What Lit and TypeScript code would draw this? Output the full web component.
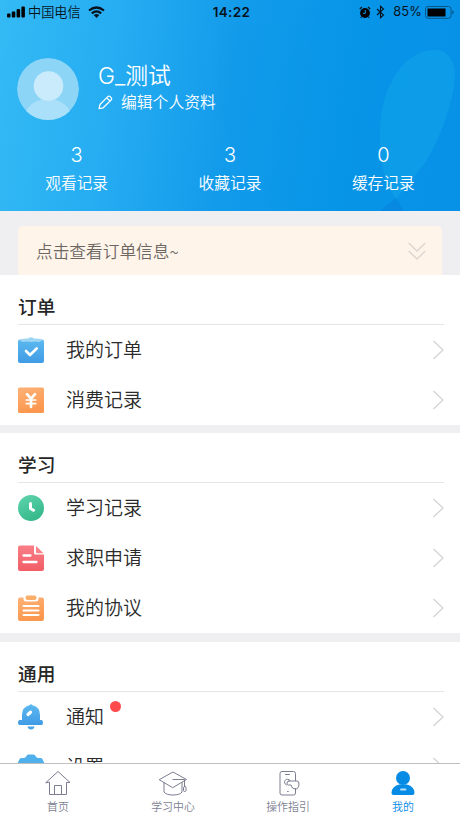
import { LitElement, html, css, svg } from "lit";
import { customElement } from "lit/decorators.js";

const icons: Record<string, unknown> = {
  order: svg`<rect x="0" y="2.500" width="26" height="23.500" rx="2" fill="url(#blue)"/><path d="M1 3Q4 1 10 1.500Q13-1 16 1.500Q22 1 25 3L21 5Q17 4 13 5Q9 4 5 5Z" fill="#9fd6f4"/><path d="M8 14l4 4L18.700 11.500" fill="none" stroke="#fff" stroke-width="2.600" stroke-linecap="round" stroke-linejoin="round"/>`,
  pay: svg`<rect y="0.500" width="26" height="25.500" rx="1.500" fill="url(#orange)"/><path d="M9 7.200l4 4.500 4-4.500M13 11.500V20" fill="none" stroke="#fff" stroke-width="2.700" stroke-linecap="round"/><path d="M8.300 13h9.400M8.300 16.700h9.400" stroke="#fff" stroke-width="1.700" stroke-linecap="round"/>`,
  clock: svg`<circle cx="13" cy="13" r="13" fill="url(#green)"/><path d="M12.500 8.500v5l3 1.800" fill="none" stroke="#fff" stroke-width="3" stroke-linecap="round" stroke-linejoin="round"/>`,
  job: svg`<path d="M2 .5h14v7.500q0 1.500 1.500 1.500H26V24a2 2 0 0 1-2 2H2a2 2 0 0 1-2-2V2.500a2 2 0 0 1 2-2Z" fill="url(#red)"/><path d="M18 1l7.500 7.300H19.500Q18 8.300 18 7Z" fill="#f98289"/><path d="M5.500 10.500h7M5.500 17h13" stroke="#fff" stroke-width="2.300" stroke-linecap="round"/>`,
  paper: svg`<rect y="2.500" width="26" height="23.500" rx="2" fill="url(#orange)"/><path d="M5.500 2v2q0 2.500 3 2.500h9q3 0 3-2.500V2" fill="#fff"/><rect x="7.500" y="0.500" width="11" height="4.500" rx="2" fill="#fbae6a"/><path d="M5.500 11h15M5.500 15.500h15M5.500 20h15" stroke="#fff" stroke-width="2" stroke-linecap="round"/>`,
  bell: svg`<path d="M11.500 1.200Q13-.7 14.500 1.200 22 3 22 11v5h1.500q1.500 0 1.500 2.500t-1.500 2.500H1.500Q0 21 0 18.500T1.500 16H4v-5Q4 3 11.500 1.200Z" fill="url(#blue)"/><path d="M9.500 22.500h7q-.5 3-3.500 3t-3.500-3Z" fill="#48a5e9"/><path d="M10 10.500l2.500-2.300" stroke="#fff" stroke-width="3.200" stroke-linecap="round"/>`,
  gear: svg`<path d="M10.500 .5h5q1.500 0 2.200 1.700.8 1.800 2.500 1.800h2.300q1.300 0 2 1.300l1.500 3q.5 1.200-.5 2.200-2 2.500 0 5 1 1 .5 2.200l-1.500 3q-.7 1.300-2 1.300h-2.300q-1.700 0-2.500 1.800-.7 1.700-2.200 1.700h-5q-1.500 0-2.200-1.700Q7.500 22 5.800 22H3.500q-1.300 0-2-1.300l-1.500-3q-.5-1.200.5-2.200 2-2.500 0-5-1-1-.5-2.200l1.500-3Q2.200 4 3.500 4h2.300q1.700 0 2.500-1.800Q9 .5 10.500.5Z" fill="#50b0ec"/><circle cx="13" cy="13" r="3" fill="#fff"/>`,
};

@customElement("menu-row")
class MenuRow extends LitElement {
  static properties = { icon: {}, label: {}, dot: { type: Boolean } };
  declare icon: string;
  declare label: string;
  declare dot: boolean;
  static styles = css`
    :host { display: flex; align-items: center; height: 50px; padding: 0 16px 0 18px; box-sizing: border-box; }
    .icon { width: 26px; height: 26px; margin-right: 22px; overflow: visible; }
    .label { position: relative; top: -1px; font-size: 19px; font-weight: 350; line-height: 28px; color: #2b2b2b; }
    .dot { position: absolute; left: 44px; top: -1px; width: 11px; height: 11px; border-radius: 50%; background: #ff4b4c; }
    .arrow { width: 12px; height: 20px; margin-left: auto; }
  `;
  render() {
    return html`<svg class="icon" viewBox="0 0 26 26"><defs>
      <linearGradient id="blue" x2="0" y2="1"><stop stop-color="#5db9ef"/><stop offset="1" stop-color="#409be5"/></linearGradient>
      <linearGradient id="orange" x2="0.300" y2="1"><stop stop-color="#fdb278"/><stop offset="1" stop-color="#fb974e"/></linearGradient>
      <linearGradient id="green" x2="0.500" y2="1"><stop stop-color="#60d5ad"/><stop offset="1" stop-color="#37b98c"/></linearGradient>
      <linearGradient id="red" x2="0" y2="1"><stop stop-color="#f97e86"/><stop offset="1" stop-color="#f25d67"/></linearGradient>
      </defs>${icons[this.icon]}</svg>
      <span class="label">${this.label}${this.dot ? html`<i class="dot"></i>` : ""}</span>
      <svg class="arrow" viewBox="0 0 12 20"><path d="M1.500 1l9.500 9-9.500 9" fill="none" stroke="#d2d2d5" stroke-width="1.200"/></svg>`;
  }
}

const sections = [
  { title: "订单", rows: [["order", "我的订单"], ["pay", "消费记录"]] },
  { title: "学习", rows: [["clock", "学习记录"], ["job", "求职申请"], ["paper", "我的协议"]] },
  { title: "通用", rows: [["bell", "通知"], ["gear", "设置"]] },
];
const stats = [["3", "观看记录"], ["3", "收藏记录"], ["0", "缓存记录"]];
const tabs = [
  { name: "首页", icon: svg`<path d="M1 12.500L13 1.500l12 11H21.500V24.500H4.500V12.500ZM9.500 24.500v-9h7v9"/>` },
  { name: "学习中心", icon: svg`<path d="M-.5 9.500L13 2 26.500 9.500 13 17.500ZM4 12.500v9.500q2 3 9 3t9-3V12.500M13 9.500h11.500v7"/><rect x="23.500" y="16.500" width="2.500" height="5" rx="1.200"/>` },
  { name: "操作指引", icon: svg`<path d="M20.500 10.500V3.500a2 2 0 0 0-2-2H7a2 2 0 0 0-2 2V23a2 2 0 0 0 2 2h11.500a2 2 0 0 0 2-2v-4.500M10.500 4.500h4M12.500 21.500h.8M11.500 15a3 3 0 1 1 3.500-4.500M14 11h8q2 0 2 3 0 5-4 5-3 0-4-4h-2.500q-1.500 0-1.500-2T14 11Z"/>` },
  { name: "我的", active: true, icon: svg`<circle class="solid" cx="13" cy="8" r="7"/><path class="solid" d="M9 14.500h8q7.500 2 7.500 8.500 0 2-2 2h-19q-2 0-2-2 0-6.500 7.500-8.500Z"/><path d="M11 19.500h4.500" class="smile"/>` },
];

@customElement("app-root")
class AppRoot extends LitElement {
  static styles = css`
    :host { display: flex; flex-direction: column; height: 818px; overflow: hidden; background: #fff; font-family: "Liberation Sans", "Noto Sans CJK SC", sans-serif; }
    svg { display: block; flex: none; }
    .header { position: relative; flex: none; height: 211px; color: #fff; background: linear-gradient(98deg, #34baf4 0%, #26adf2 24%, #139beb 50%, #0795e8 74%, #0791e7 100%); }
    .backdrop { position: absolute; inset: 0; }
    .status { position: relative; display: grid; grid-template-columns: 1fr auto 1fr; align-items: center; height: 24px; padding: 0 6px 0 7px; color: #07121c; }
    .side { display: flex; align-items: center; }
    .carrier { font: 350 13.200px/20px "Noto Sans CJK SC", sans-serif; margin: 0 7px 0 3px; }
    .time { font: 600 13.500px/20px Inter, sans-serif; letter-spacing: 0.350px; padding-left: 2px; }
    .right { justify-content: flex-end; }
    .bluetooth { margin-left: 5px; }
    .battery-text { font: 12.800px/20px Inter, sans-serif; letter-spacing: 0.200px; margin: 0 3px 0 8px; }
    .profile { position: relative; display: flex; align-items: flex-start; height: 119px; padding: 34px 0 0 17px; box-sizing: border-box; }
    .person { padding-left: 19px; }
    .name { font: 350 22.800px/30px Inter, "Noto Sans CJK SC", sans-serif; padding-top: 3px; }
    .edit { display: flex; align-items: center; font: 350 15.800px/22px "Noto Sans CJK SC", sans-serif; gap: 8px; }
    .stats { position: relative; display: grid; grid-template-columns: repeat(3, 1fr); text-align: center; }
    .num { font: 350 20px/24px Inter, sans-serif; }
    .stat { font: 350 15.700px/24px "Noto Sans CJK SC", sans-serif; margin-top: 4px; }
    .strip { flex: none; height: 64px; box-sizing: border-box; padding: 15px 18px 0; background: #efeff2; }
    .notice { display: flex; align-items: center; justify-content: space-between; height: 49px; padding: 0 16px 0 18px; border-radius: 5px 5px 0 0; background: #fff4ea; color: #6c6762; font: 350 16.700px/24px "Noto Sans CJK SC", sans-serif; }
    .content { flex: 1; min-height: 0; overflow: hidden; }
    .section + .section { border-top: 8px solid #efeff2; }
    .section + .section + .section { border-top-width: 9px; }
    .title { height: 50px; margin: 0 16px 0 18px; box-sizing: border-box; border-bottom: 1px solid #e6e6e8; font: 500 18.700px/61px "Noto Sans CJK SC", sans-serif; color: #262626; }
    menu-row { font-family: "Noto Sans CJK SC", sans-serif; }
    .tabs { flex: none; display: grid; grid-template-columns: repeat(4, 1fr); height: 55px; box-sizing: border-box; border-top: 1px solid #bfbfc2; background: #fff; }
    .tab { display: flex; flex-direction: column; align-items: center; padding: 6px 0 0 1px; color: #7c7e90; font: 350 10.900px/16px "Noto Sans CJK SC", sans-serif; gap: 2px; }
    .tab svg { width: 26px; height: 26px; overflow: visible; fill: none; stroke: currentColor; stroke-width: 1; stroke-linejoin: round; stroke-linecap: round; }
    .tab.active { color: #078ce5; }
    .solid { fill: currentColor; stroke: none; }
    .smile { stroke: #b9dff8; stroke-width: 1.800; }
  `;
  render() {
    return html`
      <div class="header">
        <svg class="backdrop" width="460" height="211" viewBox="0 0 460 211">
          <path d="M380 140Q378 98 400 68 420 46 442 51 458 58 454 87 447 126 425 163L396 199Q380 176 380 140Z" fill="#14a8ec" fill-opacity=".5"/>
          <path d="M218 24V98Q225 160 276 211H380L396 198 425 163Q447 126 454 87 458 58 442 51 420 46 400 68 378 98 380 140 330 90 300 24Z" fill="#0a96ea" fill-opacity=".08"/>
          <path d="M380 211l16-13 8 13Z" fill="#087fdc" fill-opacity=".45"/>
        </svg>
        <div class="status">
          <div class="side">
            <svg width="18" height="12" viewBox="0 0 18 12"><g><rect y="7.500" width="3.500" height="4" rx="1"/><rect x="4.800" y="5.500" width="3.500" height="6" rx="1"/><rect x="9.600" y="3" width="3.500" height="8.500" rx="1"/><rect x="14.400" y=".5" width="3.500" height="11" rx="1"/></g></svg>
            <span class="carrier">中国电信</span>
            <svg width="17" height="12" viewBox="0 0 17 12" fill="none" stroke="#07121c" stroke-width="2.200"><path d="M1 4.500Q8.500-1.500 16 4.500M3.800 7.300q4.700-3.800 9.400 0"/><path d="M5.700 9l2.800 3 2.800-3Q8.500 7 5.700 9Z" fill="#07121c" stroke="none"/></svg>
          </div>
          <span class="time">14:22</span>
          <div class="side right">
            <svg width="12" height="13" viewBox="0 0 12 13"><circle cx="6" cy="7" r="4.900"/><path d="M.8 3L3 1M11.200 3L9 1M2.500 11l-.7.700M9.500 11l.7.700" stroke="#07121c" stroke-width="1.300"/><path d="M6.300 4v3.300H4" fill="none" stroke="#129bea"/></svg>
            <svg class="bluetooth" width="9" height="14" viewBox="0 0 9 14"><path d="M1 4l6.500 6-3 2.700V1.300l3 2.700-6.500 6" fill="none" stroke="#07121c" stroke-width="1.100"/></svg>
            <span class="battery-text">85%</span>
            <svg width="29" height="13" viewBox="0 0 29 13"><rect x=".5" y=".5" width="25.500" height="11.800" rx="2.500" fill="none" stroke="#075789"/><rect x="2.500" y="2.500" width="18" height="8"/><path d="M27.200 4.300q1.500.5 1.500 2t-1.500 2Z" fill="#075789"/></svg>
          </div>
        </div>
        <div class="profile">
          <svg width="62" height="62" viewBox="0 0 62 62"><defs><clipPath id="face"><circle cx="31" cy="31" r="31"/></clipPath></defs><g clip-path="url(#face)"><circle cx="31" cy="31" r="31" fill="#8dd5f7"/><ellipse cx="31" cy="59" rx="23" ry="18" fill="#aae0f9"/><circle cx="31.500" cy="28" r="14.800" fill="#caebfb"/></g></svg>
          <div class="person">
            <div class="name">G_测试</div>
            <div class="edit"><svg width="15" height="15" viewBox="0 0 15 15" fill="none" stroke="#fff" stroke-width="1.200" stroke-linejoin="round"><path d="M1 13.700l1-4.200L9.800 1.700q1.200-1.200 2.400 0l.9.900q1.200 1.200 0 2.400L5.200 12.800ZM8.800 2.800L12 6"/></svg><span>编辑个人资料</span></div>
          </div>
        </div>
        <div class="stats">${stats.map(([n, t]) => html`<div><div class="num">${n}</div><div class="stat">${t}</div></div>`)}</div>
      </div>
      <div class="strip"><div class="notice"><span>点击查看订单信息~</span><svg width="18" height="18" viewBox="0 0 18 18" fill="none" stroke="#dcd6d0" stroke-width="1.400"><path d="M.7 1L9 9l8.300-8M.7 9L9 17l8.300-8"/></svg></div></div>
      <div class="content">${sections.map(s => html`<div class="section"><div class="title">${s.title}</div>${s.rows.map(([icon, label]) => html`<menu-row .icon=${icon} .label=${label} .dot=${icon === "bell"}></menu-row>`)}</div>`)}</div>
      <div class="tabs">${tabs.map(t => html`<div class="tab ${t.active ? "active" : ""}"><svg viewBox="0 0 26 26">${t.icon}</svg><span>${t.name}</span></div>`)}</div>
    `;
  }
}
